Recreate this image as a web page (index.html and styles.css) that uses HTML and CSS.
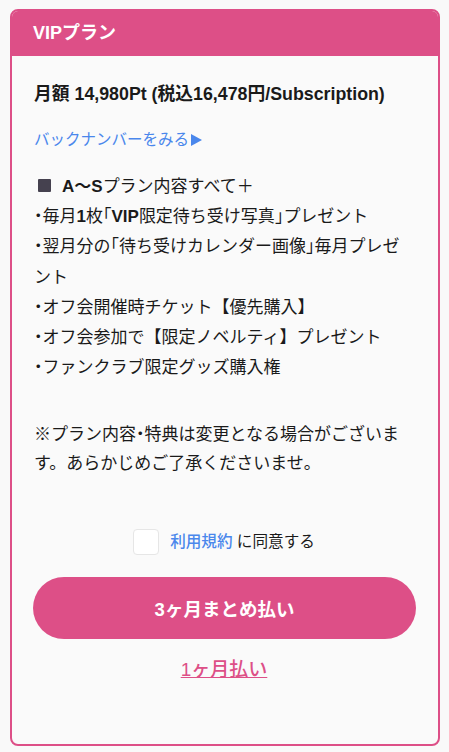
FILE: index.html
```html
<!DOCTYPE html>
<html lang="ja">
<head>
  <meta charset="UTF-8" />
  <title>VIPプラン</title>
  <link rel="stylesheet" href="styles.css">
</head>
<body>
  <div class="plan">
    <div class="plan-head">VIPプラン</div>
    <div class="plan-body">
      <p class="price">月額 14,980Pt (税込16,478円/Subscription)</p>
      <a class="backnumber" href="#">バックナンバーをみる<span class="arrow"></span></a>
      <div class="perks">
        <div><span class="box"></span><b>A～S</b>プラン内容すべて＋</div>
        <div><span class="hw">・</span>毎月<b>1</b>枚<span class="hw">「</span><b>VIP</b>限定待ち受け写真<span class="hw">」</span>プレゼント</div>
        <div><span class="hw">・</span>翌月分の<span class="hw">「</span>待ち受けカレンダー画像<span class="hw">」</span>毎月プレゼント</div>
        <div><span class="hw">・</span>オフ会開催時チケット【優先購入】</div>
        <div><span class="hw">・</span>オフ会参加で【限定ノベルティ】プレゼント</div>
        <div><span class="hw">・</span>ファンクラブ限定グッズ購入権</div>
      </div>
      <p class="note">※プラン内容<span class="hw">・</span>特典は変更となる場合がございます。あらかじめご了承くださいませ。</p>
      <label class="agree">
        <input type="checkbox">
        <span class="check"></span>
        <a href="#">利用規約</a>&nbsp;に同意する
      </label>
      <button class="pay">3ヶ月まとめ払い</button>
      <a class="pay-month" href="#">1ヶ月払い</a>
    </div>
  </div>
</body>
</html>
```

FILE: styles.css
```css
body {
  margin: 0;
  padding: 9px 9px 8px 10px;
  background-color: #f9f9f9;
  color: #1a1a1a;
  font-family: "Liberation Sans", "Noto Sans CJK JP", sans-serif;
  font-size: 17px;
}
.plan {
  border: 2px solid #dd4f87;
  border-radius: 8px;
  background-color: #fafafa;
  overflow: hidden;
}
.plan-head {
  background-color: #dd4f87;
  color: white;
  font-weight: bold;
  font-size: 18px;
  line-height: 45px;
  padding-left: 21px;
}
.plan-body {
  padding: 26px 24px 62px 22px;
  display: flex;
  flex-direction: column;
}
.price {
  margin: 0;
  font-weight: bold;
  font-size: 17.8px;
  line-height: 24px;
}
.backnumber {
  margin-top: 22px;
  color: #4a87ec;
  text-decoration: none;
  font-size: 15.5px;
  line-height: 24px;
}
.arrow {
  display: inline-block;
  border-left: 11px solid #4a87ec;
  border-top: 6.5px solid transparent;
  border-bottom: 6.5px solid transparent;
  margin-left: 2px;
  vertical-align: -1px;
}
.perks {
  margin-top: 20px;
  line-height: 30.2px;
}
.box {
  display: inline-block;
  width: 13px;
  height: 13px;
  background-color: #45414f;
  border-radius: 1px;
  margin: 0 11px 0 4px;
}
.hw {
  font-feature-settings: "halt";
}
.note {
  margin: 37px 0 0;
  line-height: 29px;
}
.agree {
  margin-top: 51px;
  display: flex;
  align-items: center;
  justify-content: center;
  font-size: 15.6px;
  line-height: 26px;
}
.agree input {
  display: none;
}
.check {
  width: 24px;
  height: 24px;
  border: 1px solid #e6e6e6;
  border-radius: 4px;
  background-color: white;
  margin-right: 11px;
}
.agree a {
  color: #4a87ec;
  text-decoration: none;
  font-weight: 500;
}
.pay {
  margin-top: 22px;
  height: 62px;
  border: none;
  border-radius: 31px;
  background-color: #dd4f87;
  color: white;
  font-family: inherit;
  font-size: 18.5px;
  font-weight: bold;
  margin-left: -1px;
  margin-right: -2px;
  cursor: pointer;
}
.pay-month {
  margin-top: 19px;
  align-self: center;
  color: #dd4f87;
  font-size: 19px;
  font-weight: 500;
  line-height: 24px;
}
```
